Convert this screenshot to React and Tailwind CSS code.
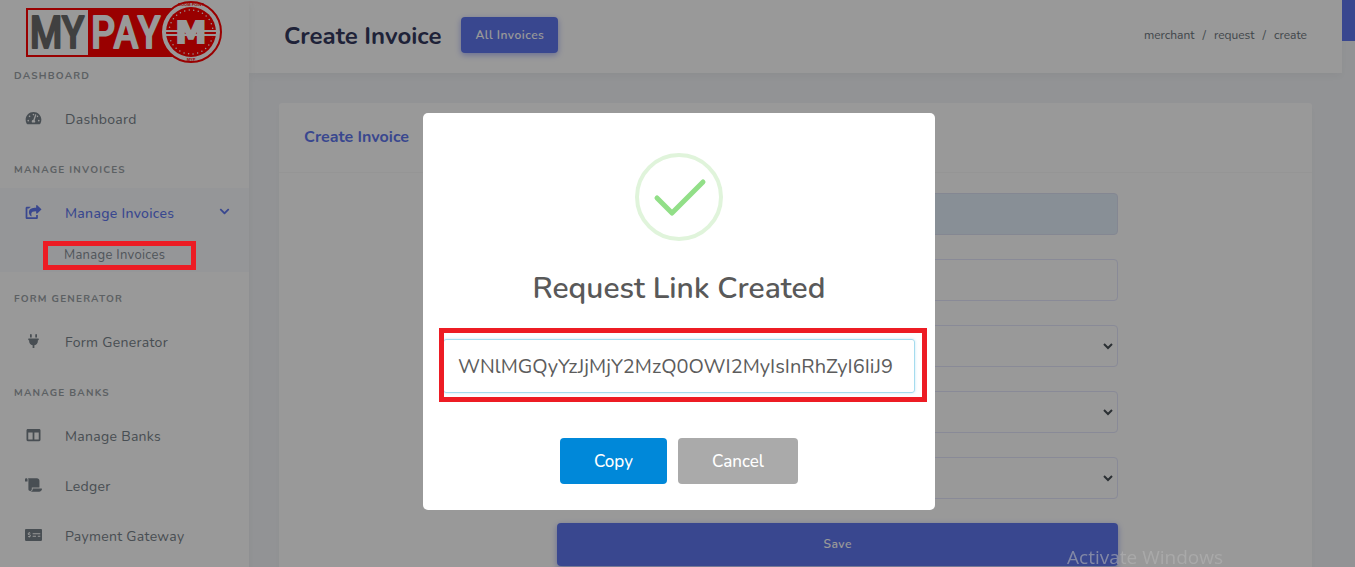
import React from "react";
import {
  FaTachometerAlt,
  FaShareSquare,
  FaPlug,
  FaColumns,
  FaScroll,
  FaMoneyCheckAlt,
  FaChevronDown,
} from "react-icons/fa";

function Logo() {
  return (
    <svg viewBox="0 0 196 64" className="h-16 w-[196px]" role="img" aria-label="MyPay">
      <rect x="0" y="8" width="165" height="49" fill="#ff0000" />
      <rect x="2" y="10" width="60" height="45" fill="#ffffff" />
      <g
        fontFamily="'Roboto Condensed', 'Open Sans Condensed', Nunito, sans-serif"
        fontSize="44"
        fontWeight="400"
        textAnchor="middle"
      >
        <g fill="#6b6b6b" stroke="#6b6b6b" strokeWidth="2" strokeLinejoin="round">
          <text x="20" y="48">M</text>
          <text x="47" y="48">Y</text>
        </g>
        <g fill="#ffffff" stroke="#ffffff" strokeWidth="2" strokeLinejoin="round">
          <text x="77" y="48">P</text>
          <text x="100" y="48">A</text>
          <text x="123" y="48">Y</text>
        </g>
      </g>
      <circle cx="165" cy="32" r="30" fill="#ffffff" stroke="#ff0000" strokeWidth="2" />
      <circle cx="165" cy="32" r="25" fill="#ff0000" />
      <circle
        cx="165"
        cy="32"
        r="22"
        fill="none"
        stroke="#ffffff"
        strokeWidth="1.500"
        strokeLinecap="round"
        strokeDasharray="0 4.600"
      />
      <rect x="141" y="29" width="48" height="8" fill="#ff0000" />
      <path d="M140 31h50M140 35h50" stroke="#ffffff" strokeWidth="2" />
      <text
        x="165"
        y="43"
        textAnchor="middle"
        fontFamily="'DejaVu Sans', sans-serif"
        fontWeight="700"
        fontSize="31"
        fill="#ffffff"
        stroke="#ffffff"
        strokeWidth="2"
      >
        M
      </text>
      <g fontFamily="'Liberation Sans', sans-serif" fontWeight="700" fontSize="4" fill="#ff0000" textAnchor="middle">
        <text x="165" y="6">BOOM POINT</text>
        <text x="165" y="61">MYP</text>
      </g>
    </svg>
  );
}

function MenuHeader({ children }) {
  return (
    <h2 className="h-11 px-[14px] pt-[19px] text-[10px] leading-[14px] font-bold tracking-[1.2px] text-[#9aa1a6] uppercase">
      {children}
    </h2>
  );
}

function MenuItem({ icon: Icon, active, children }) {
  return (
    <a
      href="#"
      className={`flex h-[50px] items-center px-[19px] text-sm tracking-[0.3px] ${
        active ? "font-medium text-[#6077ee]" : "text-[#78828a]"
      }`}
    >
      <span className="flex w-[29px] justify-center pb-[2px]">
        <Icon className="h-[14px] w-[17px]" />
      </span>
      <span className="ml-[17px] flex-1 pt-[2px]">{children}</span>
      {active && <FaChevronDown className="mb-1 size-[11px]" />}
    </a>
  );
}

function Sidebar() {
  return (
    <nav className="z-10 w-[249px] shrink-0 bg-white shadow-[0_4px_8px_rgba(0,0,0,0.05)]">
      <a href="#" className="block h-[50px] pl-[26px]">
        <Logo />
      </a>
      <MenuHeader>Dashboard</MenuHeader>
      <MenuItem icon={FaTachometerAlt}>Dashboard</MenuItem>
      <MenuHeader>Manage Invoices</MenuHeader>
      <div className="mb-px bg-[#f8fafe]">
        <MenuItem icon={FaShareSquare} active>
          Manage Invoices
        </MenuItem>
        <a href="#" className="block h-[34px] pl-16 text-[13px] leading-[34px] tracking-[0.3px] text-[#868e96]">
          Manage Invoices
        </a>
      </div>
      <MenuHeader>Form Generator</MenuHeader>
      <MenuItem icon={FaPlug}>Form Generator</MenuItem>
      <MenuHeader>Manage Banks</MenuHeader>
      <MenuItem icon={FaColumns}>Manage Banks</MenuItem>
      <MenuItem icon={FaScroll}>Ledger</MenuItem>
      <MenuItem icon={FaMoneyCheckAlt}>Payment Gateway</MenuItem>
    </nav>
  );
}

function SelectField({ label }) {
  return (
    <div className="relative">
      <select
        aria-label={label}
        className="block h-[42px] w-full appearance-none rounded-[4px] border border-[#e4e6fc] bg-white"
      />
      <svg viewBox="0 0 10 7" className="pointer-events-none absolute top-[18px] right-[5px] h-[7px] w-[10px]">
        <path d="M1 1l4 4 4-4" fill="none" stroke="#495057" strokeWidth="2" />
      </svg>
    </div>
  );
}

function InvoiceCard() {
  return (
    <section className="m-[30px] rounded-[3px] bg-white shadow-[0_4px_8px_rgba(0,0,0,0.03)]">
      <h2 className="flex h-[70px] items-center border-b border-[#f9f9f9] px-[25px] pb-px text-base font-bold text-[#6077ee]">
        Create Invoice
      </h2>
      <form className="grid grid-cols-12 px-[10px] py-5">
        <div className="col-span-7 col-start-4 flex flex-col gap-6 px-[15px]">
          <input
            aria-label="Merchant"
            readOnly
            className="h-[42px] w-full rounded-[4px] border border-[#dde2f4] bg-[#e3eefa]"
          />
          <input
            aria-label="Amount"
            className="h-[42px] w-full rounded-[4px] border border-[#e4e6fc] bg-white"
          />
          <SelectField label="Currency" />
          <SelectField label="Gateway" />
          <SelectField label="Status" />
          <button
            type="button"
            className="h-[43px] rounded-[4px] bg-[#6077ee] pb-[2px] text-xs font-semibold tracking-[0.5px] text-white shadow-[0_2px_6px_#acb5f6]"
          >
            Save
          </button>
        </div>
      </form>
    </section>
  );
}

function Main() {
  return (
    <main className="min-w-0 flex-1">
      <div className="flex items-start">
        <header className="flex h-[73px] flex-1 items-center bg-white px-[35px] shadow-[0_4px_8px_rgba(0,0,0,0.04)]">
          <h1 className="mb-[2px] text-2xl font-bold text-[#34395e]">Create Invoice</h1>
          <button
            type="button"
            className="mb-[3px] ml-5 h-9 rounded-[4px] bg-[#6077ee] px-[14px] text-xs font-semibold tracking-[0.5px] text-white shadow-[0_2px_6px_#acb5f6]"
          >
            All Invoices
          </button>
          <nav className="mb-1 ml-auto flex gap-2 text-xs text-[#6c757d]">
            <a href="#">merchant</a>
            <span>/</span>
            <a href="#">request</a>
            <span>/</span>
            <span>create</span>
          </nav>
        </header>
        <div className="h-[41px] w-[13px] bg-[#6077ee]" />
      </div>
      <div className="pr-[13px]">
        <InvoiceCard />
      </div>
    </main>
  );
}

function LinkDialog() {
  return (
    <div
      role="dialog"
      aria-modal="true"
      aria-labelledby="dialog-title"
      className="w-[512px] rounded-[5px] bg-white px-5 pt-10 pb-[26px] text-center"
    >
      <svg viewBox="0 0 88 88" className="mx-auto size-[88px]" fill="none">
        <circle cx="44" cy="44" r="42" stroke="#e0f4db" strokeWidth="4" />
        <path d="M22 45L37 60L68 29" stroke="#92df88" strokeWidth="5" strokeLinecap="round" strokeLinejoin="round" />
      </svg>
      <h2 id="dialog-title" className="mt-7 text-[30px] leading-10 font-semibold text-[#595959]">
        Request Link Created
      </h2>
      <div className="relative mt-[30px]">
        <input
          aria-label="Request link"
          readOnly
          defaultValue="WNlMGQyYzJjMjY2MzQ0OWI2MyIsInRhZyI6IiJ9"
          className="block h-[54px] w-full rounded-[3px] border border-[#a5dcee] px-[14px] text-xl text-[#5c5c5c] shadow-[0_0_3px_#c4e6f5] outline-none"
        />
        <div className="pointer-events-none absolute -top-[11px] -right-3 -bottom-[9px] -left-1 border-5 border-[#ed1c24]" />
      </div>
      <div className="mt-[45px] flex justify-center gap-[11px] text-[17px] font-medium text-white">
        <button type="button" className="h-[46px] w-[107px] rounded-[4px] bg-[#0088d9] pt-px">
          Copy
        </button>
        <button type="button" className="h-[46px] w-[120px] rounded-[4px] bg-[#aaaaaa] pt-px">
          Cancel
        </button>
      </div>
    </div>
  );
}

export default function App() {
  return (
    <div className="relative flex h-screen overflow-hidden bg-[#f4f6f9] font-['Nunito','Lato',sans-serif]">
      <Sidebar />
      <Main />
      <div className="fixed inset-0 z-20 flex items-start justify-center bg-black/40 pt-[113px] pl-[3px]">
        <LinkDialog />
      </div>
      <div className="pointer-events-none absolute top-[241px] left-[43px] z-30 h-[29px] w-[153px] border-5 border-[#ed1c24]" />
      <p className="pointer-events-none fixed right-[132px] bottom-0 z-30 font-['Open_Sans',sans-serif] text-[19px] leading-5 text-[#b4b4b4]/60">
        Activate Windows
      </p>
    </div>
  );
}
